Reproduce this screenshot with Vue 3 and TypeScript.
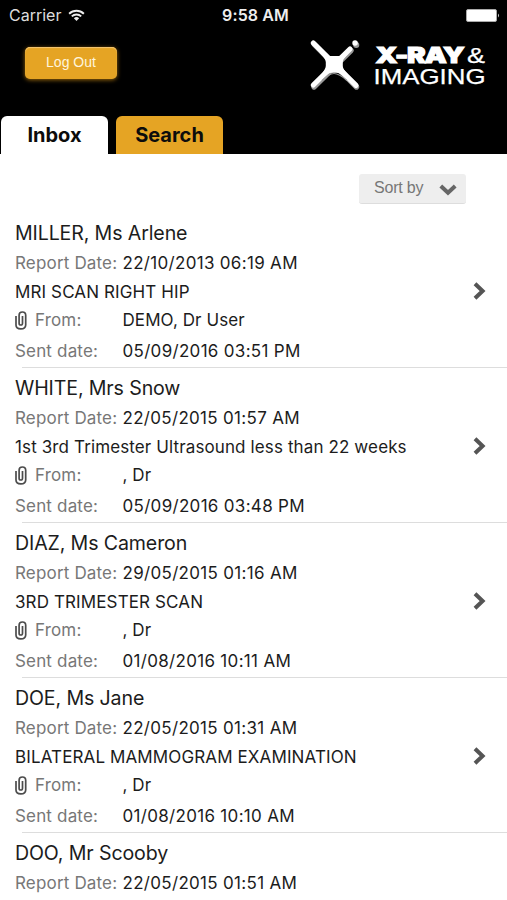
<script setup lang="ts">
interface Report {
  name: string
  reportDate: string
  exam: string
  from: string
  sentDate: string
}

const reports: Report[] = [
  { name: 'MILLER, Ms Arlene', reportDate: '22/10/2013 06:19 AM', exam: 'MRI SCAN RIGHT HIP', from: 'DEMO, Dr User', sentDate: '05/09/2016 03:51 PM' },
  { name: 'WHITE, Mrs Snow', reportDate: '22/05/2015 01:57 AM', exam: '1st 3rd Trimester Ultrasound less than 22 weeks', from: ', Dr', sentDate: '05/09/2016 03:48 PM' },
  { name: 'DIAZ, Ms Cameron', reportDate: '29/05/2015 01:16 AM', exam: '3RD TRIMESTER SCAN', from: ', Dr', sentDate: '01/08/2016 10:11 AM' },
  { name: 'DOE, Ms Jane', reportDate: '22/05/2015 01:31 AM', exam: 'BILATERAL MAMMOGRAM EXAMINATION', from: ', Dr', sentDate: '01/08/2016 10:10 AM' },
]

const nextReport = { name: 'DOO, Mr Scooby', reportDate: '22/05/2015 01:51 AM' }
</script>

<template>
  <div class="screen">
    <header class="header">
      <div class="status">
        <div class="carrier">
          <span>Carrier</span>
          <svg class="wifi" width="17" height="13" viewBox="0 0 18 13">
            <path d="M1.2 4.6a11.2 11.2 0 0 1 15.6 0M4 7.4a7.2 7.2 0 0 1 10 0" fill="none" stroke="#eee" stroke-width="2" />
            <path d="M6.2 9.5a4 4 0 0 1 5.6 0L9 12.4z" fill="#eee" />
          </svg>
        </div>
        <span class="time">9:58 AM</span>
        <svg class="battery" width="34" height="13" viewBox="0 0 34 13">
          <rect x="0.5" y="0.5" width="30" height="12" rx="1.5" fill="#fff" stroke="#aaa" />
          <path d="M32 4.5q2 2 0 4z" fill="#ccc" />
        </svg>
      </div>
      <div class="brand-row">
        <button class="logout">Log Out</button>
        <svg class="brand" width="178" height="54" viewBox="0 0 178 54">
          <g fill="none" stroke-linecap="round">
            <path d="M6 6 48.5 49M6 49 43 12.5" stroke="#999" stroke-width="5.4" />
            <path d="M5.3 5 48 47.3M5.3 47 42 11" stroke="#fff" stroke-width="5.2" />
            <path d="M48.2 7h.1" stroke="#999" stroke-width="6" />
            <path d="M47 5h.1" stroke="#fff" stroke-width="5.4" />
          </g>
          <path d="M14 42.5Q21 35.5 26 35.5T39 42.5" fill="none" stroke="#999" stroke-width="1.2" />
          <path d="M12 13.5Q18 18 21 18H31Q34 18 39 14.5L40 16Q34.8 21 34.8 24V28Q34.8 31 40 36.5L37 39.5Q32 34.8 28 34.8H24Q20 34.8 14.5 40L12 38Q17.8 31 17.8 28V24Q17.8 21 12 15Z" fill="#fff" />
          <text class="brand-bold" x="67.5" y="25" textLength="88" lengthAdjust="spacingAndGlyphs">X-RAY</text>
          <text class="brand-light" x="159" y="25.2" textLength="18" lengthAdjust="spacingAndGlyphs">&amp;</text>
          <text class="brand-light" x="65.5" y="46" textLength="112" lengthAdjust="spacingAndGlyphs">IMAGING</text>
        </svg>
      </div>
      <nav class="tabs">
        <a class="tab active">Inbox</a>
        <a class="tab">Search</a>
      </nav>
    </header>

    <div class="toolbar">
      <button class="sort">
        <span>Sort by</span>
        <svg width="18" height="12" viewBox="0 0 18 12">
          <path d="M1.8 2 9 8.8 16.2 2" fill="none" stroke="#666" stroke-width="4" />
        </svg>
      </button>
    </div>

    <main>
      <article v-for="report in reports" :key="report.name" class="report">
        <div class="details">
          <h2 class="name">{{ report.name }}</h2>
          <div class="field"><span class="label">Report Date:</span><span class="date">{{ report.reportDate }}</span></div>
          <div class="exam">{{ report.exam }}</div>
          <div class="field">
            <span class="label from">
              <svg class="clip" width="12" height="19" viewBox="0 0 12 19">
                <path d="M1 5V14Q1 17.9 5.8 17.9T10.7 14V4.2Q10.7 1 7.4 1T4.1 4.2v8Q4.1 14 5.8 14T7.5 12.2V5" fill="none" stroke="#4c4c4c" stroke-width="1.7" />
              </svg>
              From:
            </span>
            <span class="sender">{{ report.from }}</span>
          </div>
          <div class="field sent"><span class="label">Sent date:</span><span class="date">{{ report.sentDate }}</span></div>
        </div>
        <svg class="chevron" width="14" height="18" viewBox="0 0 14 18">
          <path d="M2 1.8 9.6 9 2 16.2" fill="none" stroke="#555" stroke-width="4" />
        </svg>
      </article>
      <article class="report partial">
        <div class="details">
          <h2 class="name">{{ nextReport.name }}</h2>
          <div class="field"><span class="label">Report Date:</span><span class="date">{{ nextReport.reportDate }}</span></div>
        </div>
      </article>
    </main>
  </div>
</template>

<style>
body {
  margin: 0;
  background: #fff;
}
</style>

<style scoped>
.screen {
  width: 507px;
  height: 900px;
  overflow: hidden;
  background: #fff;
  color: #1c1c1c;
  font-family: Inter, "Liberation Sans", sans-serif;
  font-size: 17px;
}
.header {
  display: flex;
  flex-direction: column;
  height: 154px;
  background: #000;
}
.status {
  display: grid;
  grid-template-columns: 1fr auto 1fr;
  align-items: center;
  height: 30px;
  padding: 0 7px 0 9px;
  color: #ddd;
  font-size: 16px;
}
.carrier {
  display: flex;
  align-items: center;
  gap: 7px;
}
.time {
  padding-left: 2px;
  color: #eee;
  font-size: 16px;
  font-weight: 600;
  letter-spacing: 0.1px;
}
.battery {
  justify-self: end;
}
.brand-row {
  display: flex;
  flex: 1;
  justify-content: space-between;
  align-items: flex-start;
  padding: 8px 21px 0 25px;
}
.logout {
  width: 92px;
  height: 32px;
  margin-top: 9px;
  padding: 0 0 2px;
  border: 0;
  border-radius: 5px;
  background: #e5a424;
  box-shadow: inset 0 1px 1px #f4c775, 0 1px 4px #98670d;
  color: #fff5dc;
  font: 14px "Liberation Sans", sans-serif;
}
.brand-bold {
  fill: #fff;
  stroke: #fff;
  stroke-width: 1px;
  font: 900 21.5px Inter, sans-serif;
  letter-spacing: -1px;
}
.brand-light {
  fill: #fff;
  stroke: #fff;
  stroke-width: 0.25px;
  font: 22.5px "Liberation Sans", sans-serif;
}
.tabs {
  display: flex;
  gap: 8px;
  padding-left: 1px;
}
.tab {
  width: 107px;
  height: 38px;
  border-radius: 6px 6px 0 0;
  background: #e5a424;
  color: #0c0c0c;
  font-size: 20px;
  font-weight: 700;
  line-height: 38px;
  text-align: center;
}
.tab.active {
  background: #fff;
}
.toolbar {
  display: flex;
  justify-content: flex-end;
  height: 38px;
  padding: 20px 41px 0 0;
}
.sort {
  display: flex;
  justify-content: space-between;
  align-items: center;
  width: 107px;
  height: 30px;
  padding: 0 9px 1px 15px;
  border: 0;
  border-bottom: 1px solid #ddd;
  border-radius: 3px;
  background: #eee;
  color: #777;
  font: 16px "Liberation Sans", sans-serif;
  letter-spacing: -0.2px;
}
.sort svg {
  margin-top: 3px;
}
.report {
  display: flex;
  justify-content: space-between;
  align-items: center;
  height: 155px;
  padding: 0 20px 0 15px;
}
.report + .report {
  background: linear-gradient(#ddd, #ddd) 22px 0 / 100% 1px no-repeat;
}
.partial {
  height: 68px;
}
.details {
  align-self: flex-start;
  padding-top: 6px;
  white-space: nowrap;
}
.name {
  margin: 0;
  font-size: 19.6px;
  font-weight: 400;
  line-height: 30px;
  letter-spacing: -0.13px;
}
.field {
  display: flex;
  line-height: 30px;
}
.date {
  letter-spacing: 0.31px;
}
.sender {
  letter-spacing: 0.08px;
}
.exam {
  height: 27px;
  line-height: 29px;
  letter-spacing: 0.12px;
}
.sent {
  line-height: 33px;
}
.label {
  width: 107.5px;
  color: #777;
  letter-spacing: 0.17px;
}
.from {
  display: flex;
  align-items: center;
  gap: 8px;
}
.chevron {
  margin-top: 2px;
}
</style>
